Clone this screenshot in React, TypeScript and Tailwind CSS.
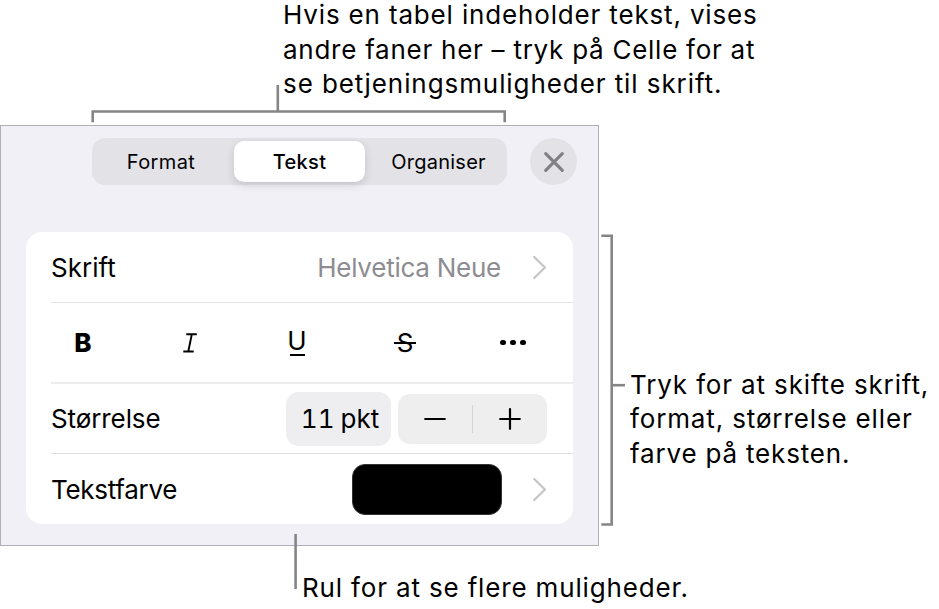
import type { ReactNode } from "react";
import { clsx } from "clsx";

const TABS = [
    { id: "format", label: "Format", className: "w-[139px] pr-[7px] tracking-[0.4px]" },
    { id: "text", label: "Tekst", className: "w-[131px] tracking-[0.3px]" },
    { id: "arrange", label: "Organiser", className: "w-[139px] pl-[8px] tracking-[0.25px]" },
];

const Chevron = () => (
    <svg width="15" height="26" viewBox="0 0 15 26" fill="none" className="text-[#c5c5c7]">
        <path
            d="M2.2 3 L13 13.5 L2.2 24"
            stroke="currentColor"
            strokeWidth="2.2"
            strokeLinecap="round"
            strokeLinejoin="round"
        />
    </svg>
);

const ItalicIcon = () => (
    <svg width="16" height="20" viewBox="0 0 16 20" fill="none" stroke="currentColor" strokeWidth="1.9">
        <path d="M4.3 1.3 H14.8 M1.3 18.5 H11.7 M9.8 1.3 L6.3 18.5" />
    </svg>
);

const Row = ({ className, children }: { className: string; children: ReactNode }) => (
    <div className={clsx("ml-[25px] flex items-center", className)}>{children}</div>
);

// Gray brackets and leader lines that tie the captions to the panel
const CalloutLines = () => (
    <svg
        width="939"
        height="609"
        viewBox="0 0 939 609"
        fill="none"
        stroke="#858585"
        strokeWidth="2.6"
        className="absolute inset-0 pointer-events-none"
    >
        <path d="M92.7 122.3 V111.5 H504.7 V122.3" />
        <path d="M277.8 85 V111" />
        <path d="M601.3 235.8 H611.7 V524.5 H601.3" />
        <path d="M612 385.2 H625" />
        <path d="M295.6 534 V589" />
    </svg>
);

export default function App() {
    return (
        <div className="relative w-[939px] h-[609px] overflow-hidden bg-white text-black whitespace-nowrap font-['Inter','Liberation_Sans',sans-serif]">
            {/* Top caption */}
            <div className="flex h-[125px] pl-[283px]">
                <div className="-mt-[2px] flex flex-col text-[26px] leading-[34.5px]">
                    <span className="tracking-[0.84px]">Hvis en tabel indeholder tekst, vises</span>
                    <span className="tracking-[0.74px]">andre faner her – tryk på Celle for at</span>
                    <span className="tracking-[0.92px]">se betjeningsmuligheder til skrift.</span>
                </div>
            </div>

            <div className="flex">
                {/* Panel */}
                <div className="w-[599px] h-[421px] shrink-0 border border-[#b0b0b4] bg-[#f1f0f6]">
                    <div className="mt-3 flex items-center pl-[91px]">
                        <div className="flex h-[47px] w-[415px] items-center justify-center rounded-[13px] bg-[#e3e2e7] text-[20px]">
                            {TABS.map((tab) => (
                                <div
                                    key={tab.id}
                                    className={clsx(
                                        "flex h-[41px] items-center justify-center",
                                        tab.className,
                                        tab.id === "text" && "rounded-[10px] bg-white font-medium shadow-[0_3px_8px_rgba(0,0,0,0.14)]",
                                    )}
                                >
                                    {tab.label}
                                </div>
                            ))}
                        </div>
                        <div className="ml-[23px] flex size-[47px] items-center justify-center rounded-full bg-[#e3e2e7] text-[#818086]">
                            <svg width="22" height="22" viewBox="0 0 22 22" fill="none">
                                <path d="M2.7 2.7 L19.3 19.3 M19.3 2.7 L2.7 19.3" stroke="currentColor" strokeWidth="3.2" strokeLinecap="round" />
                            </svg>
                        </div>
                    </div>

                    <div className="ml-[25px] mt-[47px] w-[547px] h-[292px] rounded-2xl bg-white text-[26px]">
                        <Row className="h-[71px] border-b border-[#e6e6e8] pr-[26px]">
                            <span>Skrift</span>
                            <span className="ml-auto mr-[31px] tracking-[-0.25px] text-[#8d8c92]">Helvetica Neue</span>
                            <Chevron />
                        </Row>

                        {/* Text style buttons */}
                        <Row className="h-[81px] border-b-2 border-[#ededef] pr-[10px]">
                            <div className="flex w-[64px] justify-center text-[26px] font-extrabold">B</div>
                            <div className="ml-[43px] flex w-[64px] justify-center">
                                <ItalicIcon />
                            </div>
                            <div className="ml-[43px] flex w-[64px] flex-col items-center">
                                <span className="leading-[22px]">U</span>
                                <span className="mt-[2px] h-[2px] w-[15px] bg-black" />
                            </div>
                            <div className="relative ml-[44px] flex w-[64px] justify-center">
                                S
                                <span className="absolute left-[21px] top-[19px] h-[1.5px] w-[22px] bg-black" />
                            </div>
                            <div className="ml-[44px] flex w-[64px] justify-center gap-[4.5px]">
                                <span className="size-[5.5px] rounded-full bg-black" />
                                <span className="size-[5.5px] rounded-full bg-black" />
                                <span className="size-[5.5px] rounded-full bg-black" />
                            </div>
                        </Row>

                        <Row className="h-[70px] border-b border-[#dfdfe1] pr-[26px]">
                            <span className="tracking-[-0.1px]">Størrelse</span>
                            <div className="ml-auto flex h-[54px] w-[105px] items-center justify-center rounded-[13px] bg-[#eeeef0] pl-[3px] tabular-nums [word-spacing:-1px]">
                                11 pkt
                            </div>
                            <div className="ml-[7px] flex h-[50px] w-[149px] items-center rounded-[12px] bg-[#eeeeef]">
                                <div className="flex flex-1 justify-center">
                                    <svg width="22" height="22" viewBox="0 0 22 22" stroke="currentColor" strokeWidth="2.2" strokeLinecap="round">
                                        <path d="M1.2 11 H20.8" />
                                    </svg>
                                </div>
                                <span className="h-[28px] w-[1.5px] bg-[#d3d3d5]" />
                                <div className="flex flex-1 justify-center">
                                    <svg width="22" height="22" viewBox="0 0 22 22" stroke="currentColor" strokeWidth="2.2" strokeLinecap="round">
                                        <path d="M11 1.2 V20.8 M1.2 11 H20.8" />
                                    </svg>
                                </div>
                            </div>
                        </Row>

                        <Row className="h-[70px] pr-[26px]">
                            <span className="tracking-[-0.3px]">Tekstfarve</span>
                            <div className="ml-auto mr-[30px] h-[51px] w-[150px] rounded-[13px] border border-[#333] bg-black" />
                            <Chevron />
                        </Row>
                    </div>
                </div>

                {/* Side caption */}
                <div className="ml-[31px] mt-[242.5px] flex flex-col text-[26px] leading-[34.5px]">
                    <span className="tracking-[0.86px]">Tryk for at skifte skrift,</span>
                    <span className="tracking-[0.86px]">format, størrelse eller</span>
                    <span className="tracking-[0.82px]">farve på teksten.</span>
                </div>
            </div>

            {/* Bottom caption */}
            <div className="mt-[24px] pl-[302px] text-[26px] leading-[35px] tracking-[0.84px]">
                Rul for at se flere muligheder.
            </div>

            <CalloutLines />
        </div>
    );
}
